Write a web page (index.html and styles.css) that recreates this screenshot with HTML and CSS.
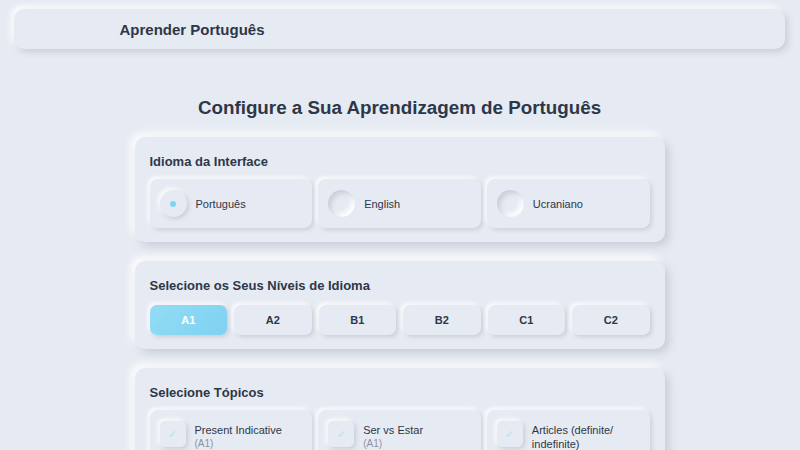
FILE: index.html
```html
<!DOCTYPE html>
<html lang="pt">
<head>
<meta charset="utf-8">
<title>Aprender Português</title>
<link rel="stylesheet" href="styles.css">
</head>
<body>
<header class="topbar">
  <div class="topbar-inner">Aprender Português</div>
</header>
<main class="main">
  <h1 class="page-title">Configure a Sua Aprendizagem de Português</h1>

  <section class="card">
    <h2 class="card-title">Idioma da Interface</h2>
    <div class="options">
      <label class="option">
        <span class="radio radio-on"><span class="dot"></span></span>
        <span class="option-label">Português</span>
      </label>
      <label class="option">
        <span class="radio"></span>
        <span class="option-label">English</span>
      </label>
      <label class="option">
        <span class="radio"></span>
        <span class="option-label">Ucraniano</span>
      </label>
    </div>
  </section>

  <section class="card">
    <h2 class="card-title">Selecione os Seus Níveis de Idioma</h2>
    <div class="levels">
      <button class="level level-on">A1</button>
      <button class="level">A2</button>
      <button class="level">B1</button>
      <button class="level">B2</button>
      <button class="level">C1</button>
      <button class="level">C2</button>
    </div>
  </section>

  <section class="card">
    <h2 class="card-title">Selecione Tópicos</h2>
    <div class="options">
      <label class="topic">
        <span class="check">✓</span>
        <span class="topic-text">Present Indicative<span class="topic-level">(A1)</span></span>
      </label>
      <label class="topic">
        <span class="check">✓</span>
        <span class="topic-text">Ser vs Estar<span class="topic-level">(A1)</span></span>
      </label>
      <label class="topic">
        <span class="check">✓</span>
        <span class="topic-text">Articles (definite/ indefinite)<span class="topic-level">(A1)</span></span>
      </label>
    </div>
  </section>
</main>
</body>
</html>
```

FILE: styles.css
```css
* { box-sizing: border-box; }
html, body { background: #e6eaf2; }
body {
  margin: 0;
  padding: 9px 15px 40px 14px;
  font-family: "Liberation Sans", Arial, sans-serif;
  color: #2d3748;
}
.topbar {
  height: 40px;
  border-radius: 10px;
  background: #e6eaf2;
  box-shadow: 3px 3px 6px #c9ced9, -3px -3px 6px #ffffff;
  display: flex;
  align-items: center;
}
.topbar-inner {
  width: 560px;
  margin: 0 auto;
  font-size: 15px;
  font-weight: bold;
  color: #2d3748;
}
.main {
  width: 530px;
  margin: 0 auto;
  padding-top: 47px;
}
.page-title {
  margin: 0 0 17px;
  font-size: 18.8px;
  line-height: 24px;
  text-align: center;
  color: #2d3748;
}
.card {
  background: #e6eaf2;
  border-radius: 10px;
  padding: 16px 15px 14px;
  margin-bottom: 19px;
  box-shadow: 4px 4px 9px #c8cdd8, -4px -4px 9px #ffffff;
}
.card-title {
  margin: 0 0 8px;
  font-size: 13px;
  line-height: 18px;
  font-weight: bold;
  color: #2d3748;
}
.options {
  display: grid;
  grid-template-columns: repeat(3, 1fr);
  gap: 6px;
}
.option, .topic {
  display: flex;
  align-items: center;
  gap: 9px;
  height: 49px;
  padding: 0 10px;
  border-radius: 8px;
  background: #e6eaf2;
  box-shadow: 2px 2px 4px #cbd0db, -2px -2px 4px #ffffff;
  font-size: 11px;
  color: #2d3748;
}
.radio {
  width: 27px;
  height: 27px;
  border-radius: 50%;
  flex: none;
  display: flex;
  align-items: center;
  justify-content: center;
  background: #e6eaf2;
  box-shadow: inset 3px 3px 5px #c9ced9, inset -3px -3px 5px #ffffff;
}
.radio-on {
  box-shadow: 2px 2px 4px #c9ced9, -2px -2px 4px #ffffff;
}
.dot {
  width: 6px;
  height: 6px;
  border-radius: 50%;
  background: #7fd6f2;
}
.levels {
  display: grid;
  grid-template-columns: repeat(6, 1fr);
  gap: 7px;
  padding-top: 2px;
}
.level {
  height: 30px;
  border: none;
  border-radius: 7px;
  background: #e6eaf2;
  box-shadow: 2px 2px 4px #c9ced9, -2px -2px 4px #ffffff;
  font-family: "Liberation Sans", Arial, sans-serif;
  font-size: 11px;
  font-weight: bold;
  color: #2d3748;
  padding: 0;
}
.level-on {
  background: linear-gradient(135deg, #93dcf6, #7ed2f0);
  color: #ffffff;
}
.topic {
  align-items: flex-start;
  height: auto;
  min-height: 49px;
  padding: 11px 10px 10px;
}
.check {
  width: 26px;
  height: 26px;
  flex: none;
  border-radius: 5px;
  display: flex;
  align-items: center;
  justify-content: center;
  background: #e6eaf2;
  box-shadow: 2px 2px 4px #c9ced9, -2px -2px 4px #ffffff;
  color: #b3e3f3;
  font-size: 11px;
}
.topic-text {
  display: flex;
  flex-direction: column;
  padding-top: 2px;
  line-height: 14px;
  font-size: 11px;
  color: #2d3748;
  max-width: 115px;
}
.topic-level {
  font-size: 10px;
  color: #8a93a3;
  line-height: 13px;
}
```
